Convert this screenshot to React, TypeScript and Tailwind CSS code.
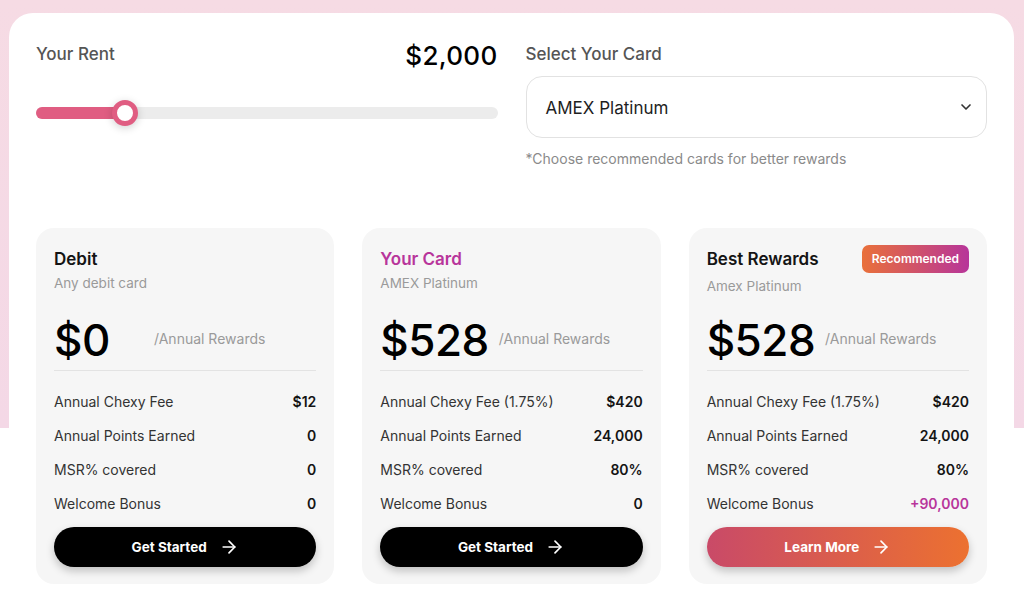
import { ArrowRight, ChevronDown } from "lucide-react";

type Row = { label: string; value: string; accent?: boolean };

type Plan = {
  title: string;
  subtitle: string;
  amount: string;
  rows: Row[];
  cta: string;
  highlight?: boolean;
  badge?: boolean;
};

const plans: Plan[] = [
  {
    title: "Debit",
    subtitle: "Any debit card",
    amount: "$0",
    rows: [
      { label: "Annual Chexy Fee", value: "$12" },
      { label: "Annual Points Earned", value: "0" },
      { label: "MSR% covered", value: "0" },
      { label: "Welcome Bonus", value: "0" },
    ],
    cta: "Get Started",
  },
  {
    title: "Your Card",
    subtitle: "AMEX Platinum",
    amount: "$528",
    rows: [
      { label: "Annual Chexy Fee (1.75%)", value: "$420" },
      { label: "Annual Points Earned", value: "24,000" },
      { label: "MSR% covered", value: "80%" },
      { label: "Welcome Bonus", value: "0" },
    ],
    cta: "Get Started",
    highlight: true,
  },
  {
    title: "Best Rewards",
    subtitle: "Amex Platinum",
    amount: "$528",
    rows: [
      { label: "Annual Chexy Fee (1.75%)", value: "$420" },
      { label: "Annual Points Earned", value: "24,000" },
      { label: "MSR% covered", value: "80%" },
      { label: "Welcome Bonus", value: "+90,000", accent: true },
    ],
    cta: "Learn More",
    badge: true,
  },
];

const PlanCard = ({ plan }: { plan: Plan }) => {
  return (
    <div className="flex h-[356px] flex-col rounded-[18px] bg-[#f6f6f6] px-[18px] pt-[17px]">
      <div className="flex h-[28px] items-center justify-between">
        <h3
          className={
            "text-[17px] leading-6 font-semibold " +
            (plan.highlight ? "text-[#b8359b]" : "text-[#141414]")
          }
        >
          {plan.title}
        </h3>
        {plan.badge && (
          <span className="flex h-[28px] items-center rounded-[7px] bg-[linear-gradient(90deg,#e9703a,#b7359a)] px-[10px] text-[12px] font-semibold text-white">
            Recommended
          </span>
        )}
      </div>
      <div className={"text-[13.5px] leading-5 text-[#9a9a9a] " + (plan.badge ? "mt-[3px]" : "mt-0")}>
        {plan.subtitle}
      </div>
      <div className={"flex items-center gap-[10px] " + (plan.badge ? "mt-[18px]" : "mt-[21px]")}>
        <span className="min-w-[90px] text-[44px] leading-[52px] font-medium tracking-[-0.5px] text-black">
          {plan.amount}
        </span>
        <span className="pb-[3px] text-[14px] text-[#9a9a9a]">/Annual Rewards</span>
      </div>
      <div className="mt-[4px] h-px bg-[#e3e3e3]" />
      <div className="mt-[20px] flex flex-col gap-[14.3px]">
        {plan.rows.map((r) => (
          <div key={r.label} className="flex h-5 items-center justify-between text-[14px]">
            <span className="text-[#333]">{r.label}</span>
            <span className={"font-semibold " + (r.accent ? "text-[#b8359b]" : "text-[#141414]")}>
              {r.value}
            </span>
          </div>
        ))}
      </div>
      <button
        className={
          "mt-[13px] flex h-[40px] items-center justify-center gap-[12px] rounded-full text-[13.5px] font-bold text-white shadow-[0_4px_8px_rgba(0,0,0,0.22)] " +
          (plan.badge ? "bg-[linear-gradient(90deg,#c94a68,#ec7130)]" : "bg-black")
        }
      >
        {plan.cta}
        <ArrowRight size={20} strokeWidth={2} />
      </button>
    </div>
  );
};

export default function App() {
  return (
    <div
      className="min-h-screen bg-[linear-gradient(to_bottom,#f6dbe4_0px,#f4d8e6_428px,#ffffff_428px)] pt-[13px] pr-[10px] pl-[9px]"
      style={{ fontFamily: "Inter, 'Noto Sans', sans-serif" }}
    >
      <div className="h-[586px] rounded-t-[24px] bg-white px-[27px] pt-[28px]">
        <div className="grid grid-cols-2 gap-[28px]">
          <div>
            <div className="flex h-[28px] items-center justify-between">
              <span className="text-[17px] font-medium text-[#555]">Your Rent</span>
              <span className="text-[26px] font-medium tracking-[0.3px] text-black">$2,000</span>
            </div>
            <div className="relative mt-[38px] h-[12px] rounded-full bg-[#ececec]">
              <div className="h-full w-[89px] rounded-full bg-[#e05d82]" />
              <div className="absolute top-[-7px] left-[76px] h-[26px] w-[26px] rounded-full border-[5px] border-[#e05d82] bg-white shadow-[0_2px_8px_rgba(0,0,0,0.18)]" />
            </div>
          </div>
          <div>
            <div className="flex h-[28px] items-center">
              <span className="text-[17px] font-medium text-[#555]">Select Your Card</span>
            </div>
            <div className="mt-[7px] flex h-[62px] items-center justify-between rounded-[16px] border border-[#e2e2e2] bg-white pr-[12px] pl-[19px]">
              <span className="pt-[3px] text-[17px] text-[#1e1e1e]">AMEX Platinum</span>
              <ChevronDown size={16} strokeWidth={2.5} className="text-[#333]" />
            </div>
            <div className="mt-[11px] text-[14px] leading-5 text-[#8a8a8a]">
              *Choose recommended cards for better rewards
            </div>
          </div>
        </div>
        <div className="mt-[59px] grid grid-cols-3 gap-[28px]">
          {plans.map((p) => (
            <PlanCard key={p.title} plan={p} />
          ))}
        </div>
      </div>
    </div>
  );
}
